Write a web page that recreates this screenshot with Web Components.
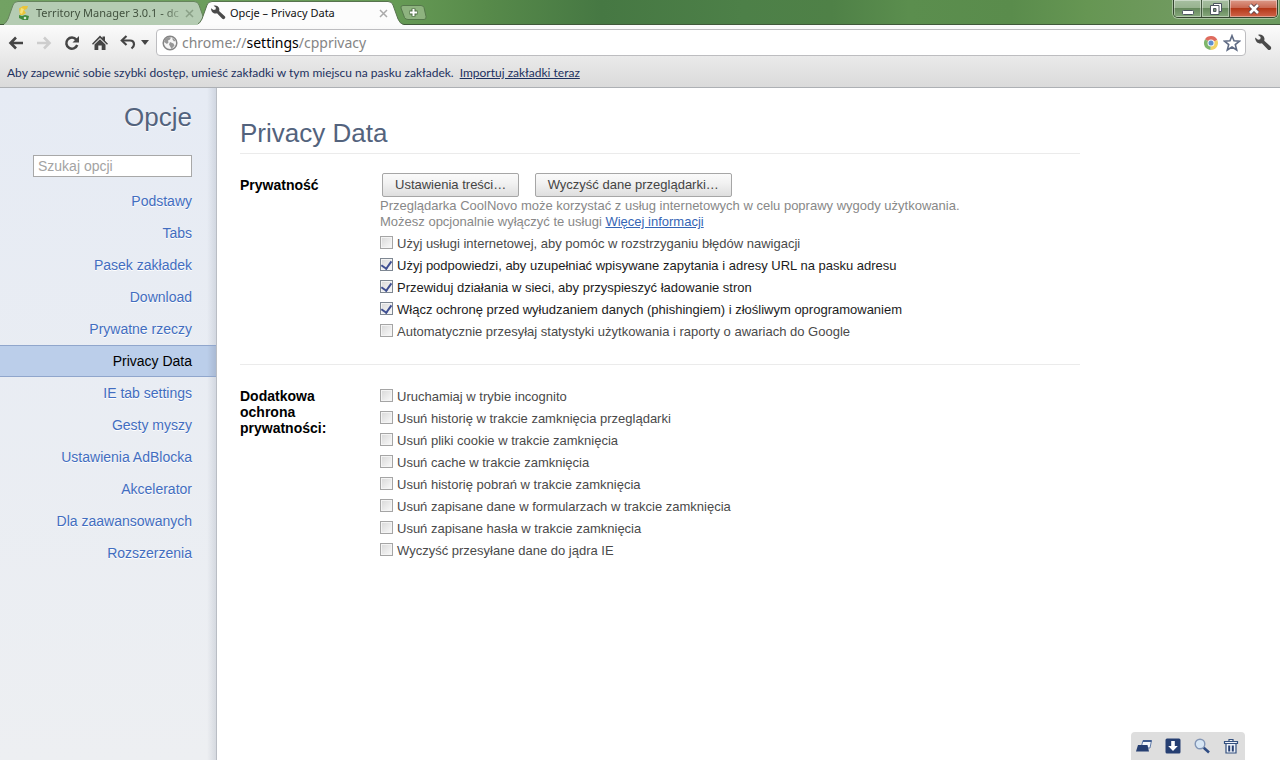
<!DOCTYPE html>
<html lang="pl">
<head>
<meta charset="utf-8">
<title>Opcje – Privacy Data</title>
<style>
  html, body { height: 100%; margin: 0; }
  body { font-family: "Liberation Sans", Arial, sans-serif; background: #fff; overflow: hidden; }
</style>
</head>
<body>
<browser-window>
  <title-bar slot="chrome">
    <browser-tab label="Territory Manager 3.0.1 - dc" icon="app"></browser-tab>
    <browser-tab label="Opcje – Privacy Data" icon="wrench" active></browser-tab>
  </title-bar>
  <nav-toolbar slot="chrome"></nav-toolbar>
  <bookmarks-bar slot="chrome"></bookmarks-bar>
  <options-sidebar slot="side"></options-sidebar>
  <options-page heading="Privacy Data">
    <option-section heading="Prywatność">
      <push-button>Ustawienia treści…</push-button>
      <push-button>Wyczyść dane przeglądarki…</push-button>
      <help-note>Przeglądarka CoolNovo może korzystać z usług internetowych w celu poprawy wygody użytkowania. <span slot="more">Możesz opcjonalnie wyłączyć te usługi</span></help-note>
      <option-check label="Użyj usługi internetowej, aby pomóc w rozstrzyganiu błędów nawigacji"></option-check>
      <option-check checked label="Użyj podpowiedzi, aby uzupełniać wpisywane zapytania i adresy URL na pasku adresu"></option-check>
      <option-check checked label="Przewiduj działania w sieci, aby przyspieszyć ładowanie stron"></option-check>
      <option-check checked label="Włącz ochronę przed wyłudzaniem danych (phishingiem) i złośliwym oprogramowaniem"></option-check>
      <option-check label="Automatycznie przesyłaj statystyki użytkowania i raporty o awariach do Google"></option-check>
    </option-section>
    <option-section heading="Dodatkowa ochrona prywatności:">
      <option-check label="Uruchamiaj w trybie incognito"></option-check>
      <option-check label="Usuń historię w trakcie zamknięcia przeglądarki"></option-check>
      <option-check label="Usuń pliki cookie w trakcie zamknięcia"></option-check>
      <option-check label="Usuń cache w trakcie zamknięcia"></option-check>
      <option-check label="Usuń historię pobrań w trakcie zamknięcia"></option-check>
      <option-check label="Usuń zapisane dane w formularzach w trakcie zamknięcia"></option-check>
      <option-check label="Usuń zapisane hasła w trakcie zamknięcia"></option-check>
      <option-check label="Wyczyść przesyłane dane do jądra IE"></option-check>
    </option-section>
  </options-page>
  <status-tray slot="tray"></status-tray>
</browser-window>

<script>
const UI_FONT = '"Noto Sans", "Open Sans", sans-serif';

const ICONS = {
  app: '<svg width="16" height="16" viewBox="0 0 16 16"><path d="M3 3.500L7 1l5 0-1 3-3 1 2 3-3 2-3 0z" fill="#e9c53a"/><path d="M5 3l3 1-2 5-2-1z" fill="#f7e27a"/><path d="M3 10l3 1 3-1 4 1-1 4H7l-4-2z" fill="#3f8a3c"/><circle cx="9" cy="13" r="1.300" fill="#cfe6cf"/></svg>',
  wrench: '<svg width="18" height="18" viewBox="0 0 16 16"><path d="M1 3.200l2.600 1.900 2-.5.3-2L3.600.8C6 0 8.600 1.200 9.200 3.600c.2.900.1 1.600-.1 2.300l5.700 5.300c1.500 1.600-.8 4.100-2.500 2.600L7 8.300c-2.700.9-6-.9-6-5.100z" fill="#4a4a4a"/></svg>',
  back: '<svg width="16" height="16" viewBox="0 0 16 16"><path d="M8 2.500L2.500 8 8 13.500M3 8h12" fill="none" stroke="#454545" stroke-width="2.600"/></svg>',
  forward: '<svg width="16" height="16" viewBox="0 0 16 16"><path d="M8 2.500L13.500 8 8 13.500M13 8H1" fill="none" stroke="#cdcdcd" stroke-width="2.600"/></svg>',
  reload: '<svg width="16" height="16" viewBox="0 0 16 16"><path d="M12.300 4.600A5.600 5.600 0 1 0 13.200 10" fill="none" stroke="#454545" stroke-width="2.500"/><path d="M15 1v6.500H8.500z" fill="#454545"/></svg>',
  home: '<svg width="16" height="16" viewBox="0 0 16 16"><path d="M8 .5l2.500 2.600V1.500h2.500v4.200l3 3-1 1L8 3 1 9.700l-1-1z" fill="#454545"/><path d="M2.500 9.500L8 4.300l5.500 5.200V15H9.700v-4.500H6.300V15H2.500z" fill="#454545"/></svg>',
  undo: '<svg width="16" height="16" viewBox="0 0 16 16"><path d="M6.500 1L1.800 5.500l4.700 4.500" fill="none" stroke="#454545" stroke-width="2.200"/><path d="M3 5.500h7q4 0 4 4 0 2-2.500 4" fill="none" stroke="#454545" stroke-width="2.200"/></svg>',
  caret: '<svg width="8" height="5" viewBox="0 0 8 5"><path d="M0 0h8L4 5z" fill="#454545"/></svg>',
  globe: '<svg width="16" height="16" viewBox="0 0 16 16"><circle cx="8" cy="8" r="6.800" fill="#f6f6f6" stroke="#858585" stroke-width="1.500"/><path d="M3 4l3-2 3 .5-1 2-2 1 .5 2L5 9 2 7zM8 7l3.500 1.500 1 2L9.500 14l-1-2L7 9.500zM10.500 2.500l3 3-1.500 1-1.500-2z" fill="#979797"/></svg>',
  chrome: '<svg width="16" height="16" viewBox="0 0 16 16"><path d="M8 8L2 4.300A7 7 0 0 1 14.300 5z" fill="#df6b5e"/><path d="M8 8l6.300-3A7 7 0 0 1 7.500 15z" fill="#f0d264"/><path d="M8 8l-.5 7A7 7 0 0 1 2 4.300z" fill="#7fb66b"/><circle cx="8" cy="8" r="3.500" fill="#f6f6f6"/><circle cx="8" cy="8" r="2.500" fill="#5d8fd0"/></svg>',
  star: '<svg width="18" height="18" viewBox="0 0 18 18"><path d="M9 1.700l2 5.100 5.500.3-4.200 3.500 1.400 5.400L9 13l-4.700 3 1.400-5.400L1.500 7.100 7 6.800z" fill="#fff" stroke="#5f6b84" stroke-width="1.600"/></svg>',
  windows: '<svg width="16" height="16" viewBox="0 0 16 16"><path d="M5.500 8L7 2.500h8.500L14 10h-2" fill="#f3f6fb" stroke="#607ba8"/><path d="M7 3h8.500" stroke="#415d90" stroke-width="2"/><path d="M2 7h9.500l1.500 6.500H0z" fill="#263f72"/></svg>',
  download: '<svg width="16" height="16" viewBox="0 0 16 16"><rect x=".5" y=".5" width="15" height="15" rx="1.500" fill="#263f72"/><path d="M6.200 3h3.600v5h3L8 13 3.200 8h3z" fill="#fff"/></svg>',
  search: '<svg width="16" height="16" viewBox="0 0 16 16"><path d="M9.500 9.500l5.500 5" stroke="#2f4c83" stroke-width="2.600"/><circle cx="6" cy="6" r="4.800" fill="#d7e6f4" stroke="#8295b5" stroke-width="1.400"/></svg>',
  trash: '<svg width="16" height="16" viewBox="0 0 16 16"><path d="M1.500 3.500h13v2h-13zM6 3V1.500h4V3M3 6v9h10V6" fill="#eef2f8" stroke="#34507f" stroke-width="1.200"/><path d="M6.200 7.500v6M9.800 7.500v6" stroke="#263f72" stroke-width="2"/></svg>'
};

class Base extends HTMLElement {
  constructor() {
    super();
    this.attachShadow({ mode: 'open' });
  }
  connectedCallback() {
    this.shadowRoot.innerHTML = '<style>:host,*{box-sizing:border-box}svg{display:block;flex:none}' + this.css() + '</style>' + this.html();
  }
  css() { return ':host{display:block}'; }
  html() { return '<slot></slot>'; }
}

customElements.define('browser-window', class extends Base {
  css() { return `
    :host { display: flex; flex-direction: column; min-height: 100vh; position: relative; }
    .main { flex: 1; display: grid; grid-template-columns: 217px minmax(0, 1fr); }
    .tray { position: absolute; right: 35px; bottom: 0; }`; }
  html() { return `<slot name="chrome"></slot>
    <div class="main"><slot name="side"></slot><slot></slot></div>
    <div class="tray"><slot name="tray"></slot></div>`; }
});

customElements.define('title-bar', class extends Base {
  css() { return `
    :host { display: flex; height: 25px; padding-left: 4px; box-shadow: inset 0 -1px #40593a;
      background: linear-gradient(90deg, #72a263 0, #669a55 31%, #578a4a 38%, #467843 47%, #4d8048 58%, #4f8147 65%, #5b8e4e 71%, #5a8c4c 79%, #669653 85%, #709a5f 92%, #6c9b60 100%); }
    .tabs { display: flex; }
    .add { width: 27px; height: 15px; margin: 5px 0 0 -6px; padding: 0; border: 0; background: none; }
    .win { margin: 0 2px 0 auto; display: flex; height: 18px; border: 1px solid #34452f; border-top: 0; border-radius: 0 0 5px 5px; overflow: hidden; box-shadow: 0 0 0 1px #a9c3a0; }
    .win button { width: 28px; padding: 0; border: 0; border-right: 1px solid #445840; display: grid; place-items: center;
      background: linear-gradient(#a7bfa1 0, #98b390 45%, #66895d 50%, #86a87b 100%); box-shadow: inset 0 0 0 1px #ffffff66; }
    .win .close { width: 47px; border-right: 0; background: linear-gradient(#dc9a89 0, #ca6953 45%, #b43819 50%, #d0654a 100%); }`; }
  html() { return `<div class="tabs"><slot></slot></div>
    <button class="add" aria-label="Nowa karta"><svg width="27" height="15" viewBox="0 0 27 15"><path d="M3 .5h18q2 0 3 2l2 9q.5 3-2 3H8q-2.500 0-3.500-2L1 3Q.5.5 3 .5z" fill="#8eb37f" stroke="#55784b"/><path d="M13.500 3.500v8M9.500 7.500h8" stroke="#4c6b43" stroke-width="4"/><path d="M13.500 4v7M10 7.500h7" stroke="#fff" stroke-width="2"/></svg></button>
    <div class="win">
      <button aria-label="Minimalizuj"><svg width="14" height="14" viewBox="0 0 14 14"><rect x="1.500" y="8.500" width="11" height="4" rx="1" fill="#fff" stroke="#4d5560"/></svg></button>
      <button aria-label="Przywróć"><svg width="14" height="14" viewBox="0 0 14 14"><path d="M4.500 1.500h8v8h-8z" fill="#fff" stroke="#4d5560"/><path d="M1.500 3.500h8.500v9H1.500z" fill="#fff" stroke="#4d5560"/><path d="M4.500 6.500h2.500v3H4.500z" fill="#7b9872" stroke="#4d5560"/></svg></button>
      <button class="close" aria-label="Zamknij"><svg width="14" height="14" viewBox="0 0 14 14"><path d="M3 3l8 8M11 3l-8 8" stroke="#5b4046" stroke-width="4.500"/><path d="M3 3l8 8M11 3l-8 8" stroke="#fff" stroke-width="2.600"/></svg></button>
    </div>`; }
});

customElements.define('browser-tab', class extends Base {
  css() {
    const on = this.hasAttribute('active');
    return `
    :host { display: grid; width: 208px; height: 25px; margin-right: -14px; position: relative; z-index: ${on ? 2 : 1}; font: 12px/16px ${UI_FONT}; }
    :host([active]) { margin-right: 0; }
    .shape, .row { grid-area: 1 / 1; }
    .row { display: flex; align-items: center; gap: 4px; padding: 1px 18px 0 12px; min-width: 0; color: ${on ? '#111' : '#42523f'}; }
    .row > svg { width: 16px; height: 16px; }
    .text { flex: 1; overflow: hidden; white-space: nowrap; font-size: 11px; ${on ? '' : '-webkit-mask-image: linear-gradient(90deg, #000 88%, #0003);'} }
    button { width: 9px; height: 9px; padding: 0; border: 0; background: none; }`;
  }
  html() {
    const on = this.hasAttribute('active');
    return `<svg class="shape" width="208" height="25" viewBox="0 0 208 25"><path d="M-2 25Q2 24 4 19L9 5Q10 1.500 14 1.500H190Q194 1.500 195 5L200 19Q202 24 206 25z" fill="${on ? '#fcfcfc' : '#b5ccb3'}"/><path d="M-2 24.500Q2 24 4 19L9 5Q10 1.500 14 1.500H190Q194 1.500 195 5L200 19Q202 24 206 24.500" fill="none" stroke="${on ? '#57734e' : '#66845d'}"/></svg>
    <div class="row">${ICONS[this.getAttribute('icon')]}<span class="text">${this.getAttribute('label')}</span>
    <button aria-label="Zamknij kartę"><svg width="9" height="9" viewBox="0 0 9 9"><path d="M1 1l7 7M8 1L1 8" stroke="${on ? '#aaa' : '#8aa087'}" stroke-width="1.500"/></svg></button></div>`;
  }
});

customElements.define('nav-toolbar', class extends Base {
  css() { return `
    :host { display: flex; align-items: center; height: 35px; padding: 0 8px; background: linear-gradient(#fbfbfb, #e8e8e8); font: 14px/20px ${UI_FONT}; }
    button { padding: 0; border: 0; background: none; display: grid; place-items: center; flex: none; }
    .nav { display: flex; gap: 12px; align-items: center; margin-right: 7px; }
    .undo { display: flex; align-items: center; gap: 5px; }
    .box { flex: 1; min-width: 0; display: flex; align-items: center; gap: 4px; height: 27px; padding: 0 4px 0 5px; background: #fff; border: 1px solid #bdbdc0; border-radius: 4px; }
    .url { flex: 1; min-width: 0; color: #858585; text-decoration: none; white-space: nowrap; }
    b { font-weight: 400; color: #000; }
    .menu { margin-left: 8px; }`; }
  html() { return `<div class="nav">
      <button aria-label="Wstecz">${ICONS.back}</button><button aria-label="Dalej">${ICONS.forward}</button>
      <button aria-label="Odśwież">${ICONS.reload}</button><button aria-label="Strona startowa">${ICONS.home}</button>
      <button class="undo" aria-label="Cofnij zamknięcie karty">${ICONS.undo}${ICONS.caret}</button></div>
    <div class="box">${ICONS.globe}<a class="url" href="#">chrome://<b>settings</b>/cpprivacy</a>${ICONS.chrome}
      <button aria-label="Dodaj zakładkę">${ICONS.star}</button></div>
    <button class="menu" aria-label="Menu">${ICONS.wrench}</button>`; }
});

customElements.define('bookmarks-bar', class extends Base {
  css() { return `
    :host { display: flex; align-items: center; gap: 6px; height: 28px; padding: 0 7px 1px; background: linear-gradient(#e8e8e8, #dadada); border-bottom: 1px solid #adb0b4; font: 12px/16px Lato, "Noto Sans", sans-serif; color: #1d315f; white-space: nowrap; }
    a { color: #1d315f; }`; }
  html() { return `<span>Aby zapewnić sobie szybki dostęp, umieść zakładki w tym miejscu na pasku zakładek.</span><a href="#">Importuj zakładki teraz</a>`; }
});

customElements.define('options-sidebar', class extends Base {
  css() { return `
    :host { display: block; border-right: 1px solid #b9bdc4; background: linear-gradient(90deg, #8f98a800 207px, #8f98a840), linear-gradient(#e6ebf4, #edeff2); text-align: right; font-size: 14px; line-height: 16px; }
    h1 { margin: 0; padding: 14px 24px 0; font-size: 26px; line-height: 30px; font-weight: 400; color: #53637d; text-shadow: 0 1px 1px #fff; }
    input { display: block; width: 159px; height: 22px; margin: 23px 24px 8px auto; padding: 0 4px; border: 1px solid #a8a8a8; background: #fff; font: 14px/16px "Liberation Sans", Arial, sans-serif; outline: 0; }
    input::placeholder { color: #a3a3a3; }
    ul { list-style: none; margin: 0; padding: 0; }
    a { display: block; padding: 7px 24px; border: solid #0000; border-width: 1px 0; color: #426dc0; text-decoration: none; text-shadow: 0 1px 0 #fff; }
    a.on { color: #000; background: linear-gradient(90deg, #bbceea 207px, #a9b9d3); border-color: #90a6cc; text-shadow: none; }`; }
  html() {
    const items = ['Podstawy', 'Tabs', 'Pasek zakładek', 'Download', 'Prywatne rzeczy', 'Privacy Data', 'IE tab settings', 'Gesty myszy', 'Ustawienia AdBlocka', 'Akcelerator', 'Dla zaawansowanych', 'Rozszerzenia'];
    return `<h1>Opcje</h1><input type="text" placeholder="Szukaj opcji" aria-label="Szukaj opcji">
      <nav><ul>${items.map(t => `<li><a href="#"${t === 'Privacy Data' ? ' class="on" aria-current="page"' : ''}>${t}</a></li>`).join('')}</ul></nav>`;
  }
});

customElements.define('options-page', class extends Base {
  css() { return `
    :host { display: block; padding: 30px 24px 0 23px; background: #fff; }
    .col { max-width: 840px; }
    h2 { margin: 0; padding-bottom: 5px; border-bottom: 1px solid #ebebeb; font-size: 26px; line-height: 30px; font-weight: 400; color: #53637d; }`; }
  html() { return `<div class="col"><h2>${this.getAttribute('heading')}</h2><slot></slot></div>`; }
});

customElements.define('option-section', class extends Base {
  css() { return `
    :host { display: grid; grid-template-columns: 120px minmax(0, 1fr); column-gap: 20px; padding: 19px 0 22px; }
    :host(:not(:first-of-type)) { border-top: 1px solid #ebebeb; padding-top: 20px; }
    h3 { margin: 4px 16px 0 0; font-size: 14px; line-height: 16px; font-weight: 700; color: #000; }
    :host(:not(:first-of-type)) h3 { margin-top: 3px; }`; }
  html() { return `<h3>${this.getAttribute('heading')}</h3><div><slot></slot></div>`; }
});

customElements.define('push-button', class extends Base {
  css() { return `
    :host { display: inline-block; vertical-align: top; margin: 0 9px 0 2px; }
    button { height: 24px; padding: 0 12px; border: 1px solid #a6a6a6; border-radius: 2px; background: linear-gradient(#fafafa, #f2f2f2 40%, #dedede); color: #444; font: 13px/16px "Liberation Sans", Arial, sans-serif; white-space: nowrap; }`; }
  html() { return '<button type="button"><slot></slot></button>'; }
});

customElements.define('help-note', class extends Base {
  css() { return `
    :host { display: block; margin: 1px 0 2px; font-size: 13px; line-height: 16px; color: #888; }
    p { margin: 0; }
    a { color: #3565b5; }`; }
  html() { return '<p><slot></slot></p><p><slot name="more"></slot> <a href="#">Więcej informacji</a></p>'; }
});

customElements.define('option-check', class extends Base {
  css() { return `
    :host { display: block; font-size: 13px; line-height: 16px; }
    label { display: flex; align-items: center; gap: 4px; height: 22px; padding-top: 2px; color: ${this.hasAttribute('checked') ? '#1c1c1c' : '#4a4a4a'}; }
    input { appearance: none; flex: none; width: 13px; height: 13px; margin: 0 0 3px; border: 1px solid #a5a5a5; background: linear-gradient(135deg, #d8d8d8, #fafafa); box-shadow: inset 0 0 0 1px #f4f4f4; display: grid; }
    input:checked { border-color: #7e8792; }
    input:checked::after { content: ""; width: 5px; height: 8px; margin: 0 0 2px; place-self: center; border: solid #3f4f92; border-width: 0 2px 2px 0; transform: rotate(35deg); }`; }
  html() { return `<label><input type="checkbox"${this.hasAttribute('checked') ? ' checked' : ''}>${this.getAttribute('label')}</label>`; }
});

customElements.define('status-tray', class extends Base {
  css() { return `
    :host { display: flex; gap: 13px; height: 28px; padding: 0 6px 0 5px; align-items: center; background: #dedede; border-radius: 4px 4px 0 0; }
    button { padding: 0; border: 0; background: none; }`; }
  html() { return [['windows', 'Okna'], ['download', 'Pobrane'], ['search', 'Powiększenie'], ['trash', 'Wyczyść']].map(([i, l]) => `<button aria-label="${l}">${ICONS[i]}</button>`).join(''); }
});
</script>
</body>
</html>
